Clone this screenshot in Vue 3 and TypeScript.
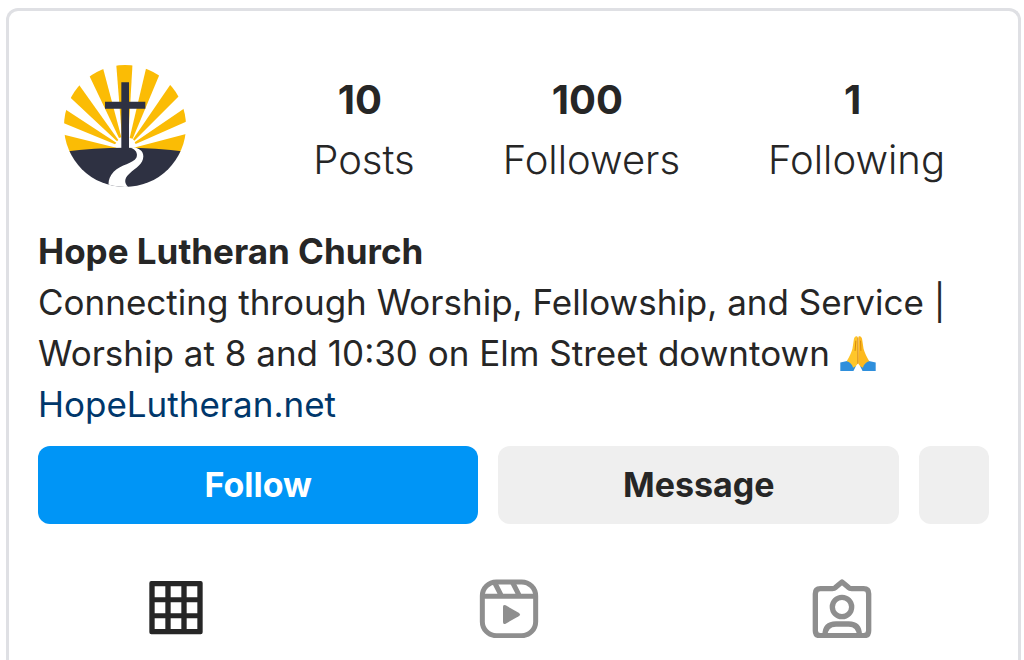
<script setup lang="ts">
import { ref } from 'vue'

interface Stat {
  value: string
  label: string
}

type TabName = 'posts' | 'reels' | 'tagged'

const stats: Stat[] = [
  { value: '10', label: 'Posts' },
  { value: '100', label: 'Followers' },
  { value: '1', label: 'Following' },
]

const activeTab = ref<TabName>('posts')
</script>

<template>
  <main class="card">
    <header class="top">
      <svg class="avatar" viewBox="41 31 366 366" role="img" aria-label="Hope Lutheran Church logo">
        <defs>
          <clipPath id="disc"><circle cx="224" cy="214" r="183" /></clipPath>
        </defs>
        <g clip-path="url(#disc)">
          <g fill="#fbbc05">
            <path d="M197 20H247L233 262H216Z" />
            <path d="M290 29L331 51L247 252L238 250Z" />
            <path d="M367 80L396 114L252 258L248 254Z" />
            <path d="M411 155L419 196L256 268L253 263Z" />
            <path d="M420 235V300L250 284V279Z" />
            <path d="M155 29L112 53L206 250L213 248Z" />
            <path d="M80 82L51 120L200 260L204 256Z" />
            <path d="M36 158L27 200L194 269L198 264Z" />
            <path d="M28 237V300L198 284V279Z" />
          </g>
          <path d="M41 291Q224 268 407 291V400H41Z" fill="#2e3142" />
          <path d="M213 83H236V141H285V162H236V284H213V162H164V141H213Z" fill="#2e3142" />
          <path d="M240 279C258 284 263 297 258 309C249 326 212 329 190 351C176 366 172 382 176 402H240C219 388 221 371 237 357C256 340 279 329 279 305C279 288 264 280 250 278Z" fill="#fff" />
        </g>
      </svg>
      <dl class="stats">
        <div v-for="s in stats" :key="s.label" class="stat">
          <dt class="label">{{ s.label }}</dt>
          <dd class="value">{{ s.value }}</dd>
        </div>
      </dl>
    </header>

    <section class="bio">
      <h1 class="name">Hope Lutheran Church</h1>
      <p class="about">
        Connecting through Worship, Fellowship, and Service |<br />
        Worship at 8 and 10:30 on Elm Street downtown
        <svg class="hands" viewBox="0 0 105 104" role="img" aria-label="Folded hands">
          <path d="M0 79L27 73L46 90L39 104H0Z" fill="#2f8fdc" />
          <path d="M105 79L78 73L59 90L66 104H105Z" fill="#2f8fdc" />
          <path d="M51 2C46-1 41 3 40 11L36 38C32 51 27 62 19 75C28 77 35 84 38 94C46 91 51 86 52 79Z" fill="#ffc62a" />
          <path d="M54 2C59-1 64 3 65 11L69 38C73 51 78 62 86 75C77 77 70 84 67 94C59 91 54 86 53 79Z" fill="#fdb91d" />
          <path d="M52 5V82M46 15L44 43M60 15L61 43" fill="none" stroke="#d98a0c" stroke-width="3" stroke-linecap="round" />
        </svg>
      </p>
      <a class="site" href="#">HopeLutheran.net</a>
    </section>

    <div class="actions">
      <button type="button" class="btn follow">Follow</button>
      <button type="button" class="btn message">Message</button>
      <button type="button" class="btn more" aria-label="More"></button>
    </div>

    <nav class="tabs">
      <button type="button" class="tab" :class="{ active: activeTab === 'posts' }" aria-label="Posts" @click="activeTab = 'posts'">
        <svg viewBox="0 0 180 180">
          <path fill="currentColor" fill-rule="evenodd" d="M16 9H164Q170 9 170 15V163Q170 169 164 169H16Q10 169 10 163V15Q10 9 16 9ZM26 25V58H58V25ZM74 25V58H106V25ZM122 25V58H154V25ZM26 73V106H58V73ZM74 73V106H106V73ZM122 73V106H154V73ZM26 121V153H58V121ZM74 121V153H106V121ZM122 121V153H154V121Z" />
        </svg>
      </button>
      <button type="button" class="tab" :class="{ active: activeTab === 'reels' }" aria-label="Reels" @click="activeTab = 'reels'">
        <svg viewBox="0 0 180 180" fill="none" stroke="currentColor" stroke-width="15">
          <rect x="10" y="12" width="160" height="161" rx="42" />
          <path d="M10 55H170M46 12L68 55M100 12L122 55" />
          <path d="M72 86V132Q72 141 80 137L119 115Q127 110 119 104L80 82Q72 78 72 86Z" fill="currentColor" stroke="none" />
        </svg>
      </button>
      <button type="button" class="tab" :class="{ active: activeTab === 'tagged' }" aria-label="Tagged" @click="activeTab = 'tagged'">
        <svg viewBox="0 0 180 180" fill="none" stroke="currentColor" stroke-width="16" stroke-linejoin="round">
          <path d="M25 32H61Q67 32 71 28L90 12L109 28Q113 32 119 32H155Q170 32 170 47V158Q170 173 155 173H25Q10 173 10 158V47Q10 32 25 32Z" />
          <circle cx="90" cy="87" r="29" />
          <path d="M39 172Q39 138 72 138H110Q142 138 142 172" />
        </svg>
      </button>
    </nav>
  </main>
</template>

<style>
body {
  background: #fff;
}
</style>

<style scoped>
.card {
  box-sizing: border-box;
  min-height: calc(100vh - 8px);
  margin: 8px 3px 0 6px;
  padding: 54px 29px 16px;
  border: 3px solid #dfe0e4;
  border-bottom: 0;
  border-radius: 12px 12px 0 0;
  background: #fff;
  color: #262626;
  font-family: Inter, "Liberation Sans", sans-serif;
}

.top {
  display: flex;
  justify-content: space-between;
  padding: 0 44px 0 26px;
}

.avatar {
  width: 122px;
  height: 122px;
}

.stats {
  display: flex;
  gap: 88px;
  margin: 5px 0 0;
}

.stat {
  display: flex;
  flex-direction: column-reverse;
  justify-content: flex-end;
  text-align: center;
}

.value {
  margin: 0;
  padding-right: 8px;
  font-size: 40px;
  font-weight: 700;
  line-height: 60px;
}

.label {
  font-size: 40px;
  font-weight: 300;
  line-height: 60px;
}

.bio {
  margin-top: 36px;
  font-size: 35px;
  line-height: 51px;
}

.name {
  margin: 0;
  font-size: 35px;
  font-weight: 700;
  line-height: 51px;
}

.about {
  margin: 0;
  white-space: nowrap;
}

.hands {
  width: 36px;
  height: 35px;
  vertical-align: -5px;
}

.site {
  display: block;
  width: fit-content;
  color: #00376b;
  text-decoration: none;
}

.actions {
  display: flex;
  gap: 20px;
  margin-top: 16px;
}

.btn {
  height: 78px;
  padding: 0 0 2px;
  border: 0;
  border-radius: 12px;
  background: #efefef;
  color: #262626;
  font-family: inherit;
  font-size: 34px;
  font-weight: 700;
}

.follow {
  flex: 441;
  background: #0095f6;
  color: #fff;
}

.message {
  flex: 401;
}

.more {
  flex: 0 0 70px;
}

.tabs {
  display: grid;
  grid-template-columns: repeat(3, 1fr);
  margin: 54px -19px 0 -29px;
}

.tab {
  display: flex;
  justify-content: center;
  padding: 0;
  border: 0;
  background: none;
  color: #8e8e8e;
}

.tab.active {
  color: #262626;
}

.tab svg {
  width: 60px;
  height: 60px;
}
</style>
